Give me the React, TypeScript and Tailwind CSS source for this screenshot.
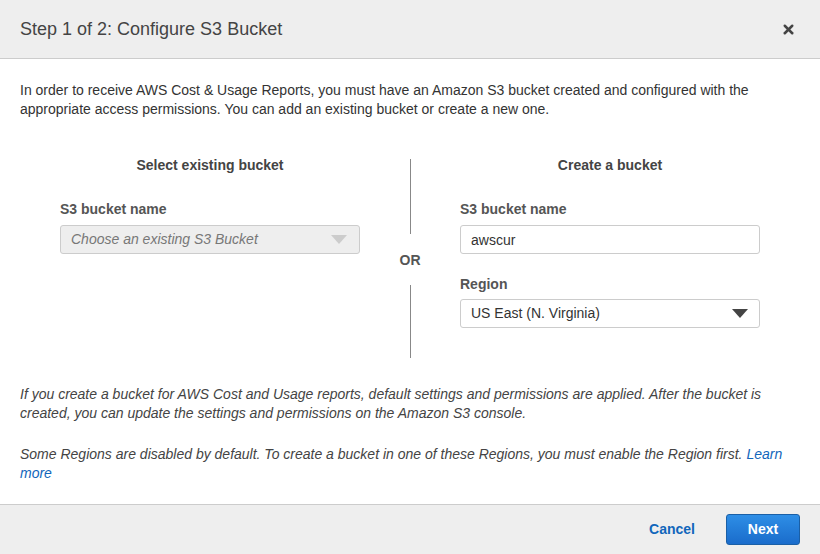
import { X } from "lucide-react";

const font = { fontFamily: '"Liberation Sans", Arial, Helvetica, sans-serif' };

const Caret = ({ color }: { color: string }) => (
  <svg width="16" height="9" viewBox="0 0 16 9" aria-hidden="true">
    <path d="M0 0 L16 0 L8 9 Z" fill={color} />
  </svg>
);

export default function App() {
  return (
    <div className="w-[820px] h-[554px] bg-white flex flex-col text-[#333]" style={font}>
      {/* Header */}
      <header className="h-[59px] shrink-0 bg-[#eeeeee] border-b border-[#cccccc] flex items-center justify-between pl-5 pr-[24px]">
        <h1 className="text-[18px] text-[#444] leading-none">Step 1 of 2: Configure S3 Bucket</h1>
        <button aria-label="Close" className="text-[#444]">
          <X size={15} strokeWidth={4} />
        </button>
      </header>

      {/* Body */}
      <main className="flex-1 px-5 pt-[22px]">
        <p className="text-[14px] leading-[19px] text-[#333]">
          In order to receive AWS Cost &amp; Usage Reports, you must have an Amazon S3 bucket created and configured with the
          appropriate access permissions. You can add an existing bucket or create a new one.
        </p>

        <div className="flex mt-[37px] h-[202px]">
          {/* Select existing */}
          <section className="flex-1 flex flex-col">
            <h2 className="text-center text-[14px] font-bold text-[#444] leading-[18px]">Select existing bucket</h2>
            <div className="px-10 mt-[26px]">
              <label className="block text-[14px] font-bold text-[#555] leading-[18px]">S3 bucket name</label>
              <div className="mt-[7px] h-[29px] w-[300px] rounded-[3px] border border-[#cccccc] bg-[#eeeeee] flex items-center justify-between pl-[10px] pr-[12px]">
                <span className="italic text-[14px] text-[#777]">Choose an existing S3 Bucket</span>
                <Caret color="#cccccc" />
              </div>
            </div>
          </section>

          {/* OR divider */}
          <div className="w-[20px] flex flex-col items-center">
            <div className="w-px bg-[#888] h-[75px] mt-[3px]" />
            <span className="text-[14px] font-bold text-[#555] leading-[18px] mt-[17px] mb-[16px]">OR</span>
            <div className="w-px bg-[#888] h-[74px]" />
          </div>

          {/* Create a bucket */}
          <section className="flex-1 flex flex-col">
            <h2 className="text-center text-[14px] font-bold text-[#444] leading-[18px]">Create a bucket</h2>
            <div className="px-10 mt-[26px]">
              <label className="block text-[14px] font-bold text-[#555] leading-[18px]">S3 bucket name</label>
              <input
                defaultValue="awscur"
                className="mt-[7px] h-[29px] w-[300px] rounded-[3px] border border-[#cccccc] bg-white px-[10px] text-[14px] text-[#333] outline-none"
              />
              <label className="block mt-[21px] text-[14px] font-bold text-[#555] leading-[18px]">Region</label>
              <div className="mt-[6px] h-[29px] w-[300px] rounded-[3px] border border-[#cccccc] bg-white flex items-center justify-between pl-[10px] pr-[11px]">
                <span className="text-[14px] text-[#333]">US East (N. Virginia)</span>
                <Caret color="#444" />
              </div>
            </div>
          </section>
        </div>

        <p className="mt-[27px] italic text-[14px] leading-[19px] text-[#444]">
          If you create a bucket for AWS Cost and Usage reports, default settings and permissions are applied. After the bucket is
          created, you can update the settings and permissions on the Amazon S3 console.
        </p>
        <p className="mt-[22px] italic text-[14px] leading-[19px] text-[#444]">
          Some Regions are disabled by default. To create a bucket in one of these Regions, you must enable the Region first.{" "}
          <a className="text-[#1166bb]" href="#">Learn more</a>
        </p>
      </main>

      {/* Footer */}
      <footer className="h-[50px] shrink-0 bg-[#eeeeee] border-t border-[#cccccc] flex items-center justify-end gap-[31px] pr-5">
        <button className="text-[14px] font-bold text-[#1166bb]">Cancel</button>
        <button className="h-[31px] w-[74px] rounded-[3px] border border-[#1a5fa6] bg-gradient-to-b from-[#2e8ee6] to-[#1a6ccb] text-white text-[14px] font-bold">
          Next
        </button>
      </footer>
    </div>
  );
}
